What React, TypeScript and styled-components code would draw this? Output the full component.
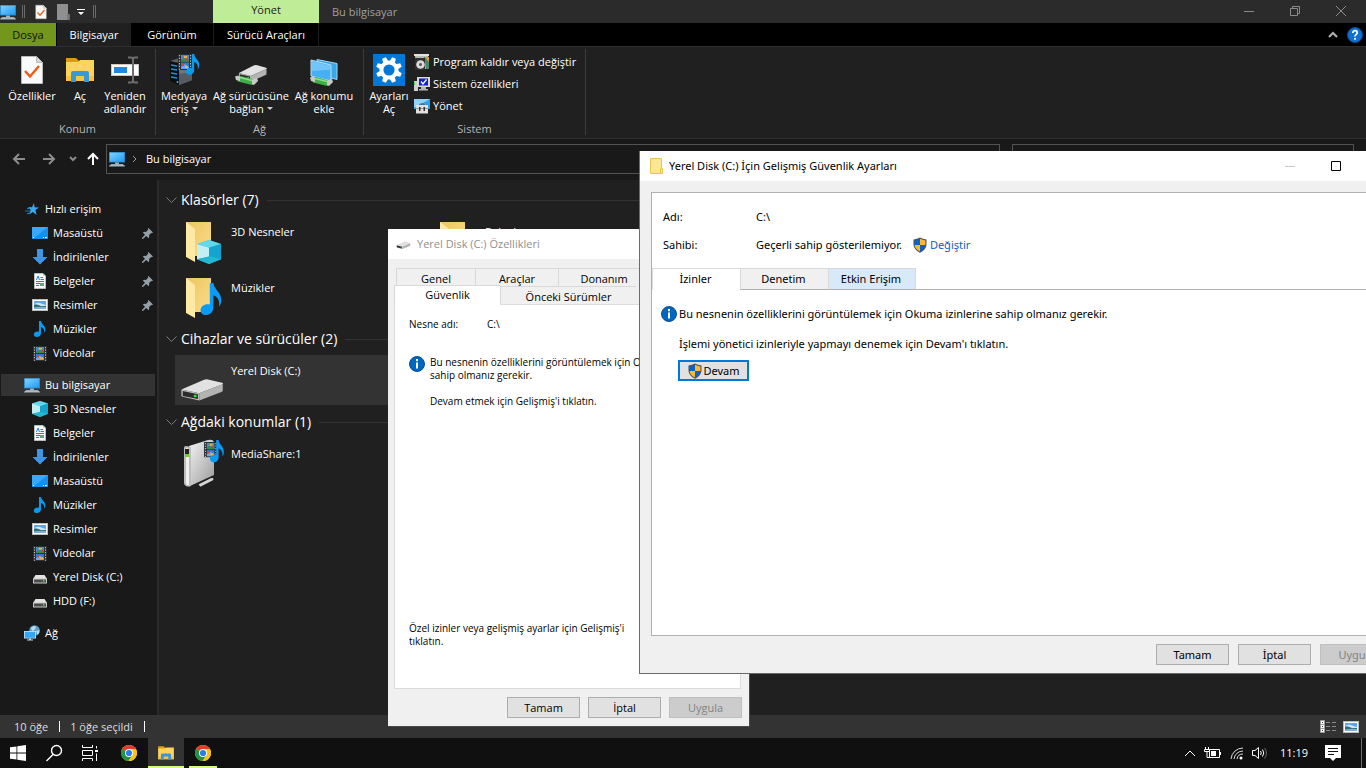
import React from 'react';
import styled, { createGlobalStyle, css } from 'styled-components';

const Global = createGlobalStyle`
  *, *::before, *::after { box-sizing: border-box; }
  html, body { margin: 0; background: #101010; }
  body { font: 11px/16px "Open Sans", "Noto Sans", sans-serif; color: #fff; }
  button { font: inherit; color: inherit; background: none; border: 0; padding: 0; margin: 0; }
  ul { list-style: none; margin: 0; padding: 0; }
  h1, h2, p, dl, dd, dt { margin: 0; font: inherit; }
  svg { display: block; flex: none; }
`;

/* ---------- icons ---------- */

type IconProps = { size?: number };

const PcIcon = ({ size = 16 }: IconProps) => (
  <svg width={size} height={size} viewBox="0 0 16 16">
    <defs>
      <linearGradient id="pcScreen" x1="0" y1="0" x2="1" y2="1">
        <stop offset="0" stopColor="#7fd3ff" />
        <stop offset="1" stopColor="#1e9bf5" />
      </linearGradient>
    </defs>
    <rect x="0" y="1" width="16" height="10.5" fill="#2d7fb8" />
    <rect x="0.8" y="1.7" width="14.4" height="9" fill="url(#pcScreen)" />
    <rect x="6" y="11.5" width="4" height="1.5" fill="#9fb4c2" />
    <path d="M2 13.2h12l2 2H0z" fill="#c3d5e0" />
    <path d="M0 14.6h16v.8H0z" fill="#7e98a8" />
  </svg>
);

const CheckDoc = ({ size = 16 }: IconProps) => (
  <svg width={size} height={size} viewBox="0 0 32 32">
    <path d="M5.500 2.500h15l6 6v21h-21z" fill="#fafafa" stroke="#b9b9b9" strokeWidth="1" />
    <path d="M20.500 2.500v6h6z" fill="#d8d8d8" stroke="#b9b9b9" />
    <path d="M9 17l5 5.500L23 12" fill="none" stroke="#f05a14" strokeWidth="2.400" />
  </svg>
);

const GreyFolder = () => (
  <svg width="16" height="16" viewBox="0 0 16 16">
    <path d="M2 0h11v10h1.500v6H2z" fill="#8f8f8f" />
    <path d="M12 10h2.500v6H12z" fill="#777" />
  </svg>
);

const YellowFolder = () => (
  <svg width="16" height="16" viewBox="0 0 16 16">
    <path d="M2.500.5h11v10h1v5h-12z" fill="#ffe596" stroke="#e8c552" />
    <path d="M12.500 15.500v-5" stroke="#e8c552" />
  </svg>
);

const ExplorerFolder = ({ size = 32 }: IconProps) => (
  <svg width={size} height={size} viewBox="0 0 32 32">
    <path d="M2 4h10l3 3v4H2z" fill="#e09c08" />
    <path d="M2 8h12l2-2h14v21H2z" fill="#ffd45e" />
    <path d="M2 22h28v5H2z" fill="#fbc33c" />
    <path d="M7 28V19q0-2 2-2h14q2 0 2 2v9h-5v-6h-8v6z" fill="#3c96dc" />
  </svg>
);

const RenameIcon = () => (
  <svg width="32" height="32" viewBox="0 0 32 32">
    <rect x="2.500" y="10.500" width="27" height="11" fill="#fff" stroke="#c8c8c8" />
    <rect x="5" y="13" width="13" height="6" fill="#1e88e5" />
    <path d="M19 3.500h3q2 0 2 2v21q0 2-2 2h-3M29 3.500h-3q-2 0-2 2v21q0 2 2 2h3" fill="none" stroke="#6e6e6e" strokeWidth="2" />
    <path d="M24 5v22" stroke="#6e6e6e" strokeWidth="2" />
  </svg>
);

const FilmShape = () => (
  <>
    <rect x="0" y="0" width="14" height="16" fill="#2c2c2c" />
    <path d="M1.500 1v15M12.500 1v15" stroke="#b8b8b8" strokeWidth="1.200" strokeDasharray="1.300 1.400" />
    <rect x="3" y="1" width="8" height="6.500" fill="#4c86d8" />
    <path d="M3 6l3-2 3 2 2-1v2.500H3z" fill="#3b8a4a" />
    <rect x="6" y="2" width="3" height="2" fill="#e8b23c" />
    <rect x="8" y="4" width="2" height="2" fill="#cf3b3b" />
    <rect x="3" y="8.500" width="8" height="6.500" fill="#3a74d0" />
    <path d="M3 13l4-3 4 3v2H3z" fill="#67a8f0" />
    <rect x="4" y="10" width="2" height="2" fill="#d8453b" />
    <rect x="7" y="12" width="3" height="2" fill="#e6b94a" />
  </>
);

const NoteShape = () => (
  <path d="M6 0h2c.3 3.500 5 4.500 4.300 9.500-.1.900-.6 1.700-1.200 2.300.6-3-.8-5-3.100-5.700v6.200C8 14.600 6 16 4 16s-3.400-1.200-3.100-2.800C1.200 11.400 3.700 10 6 10.800z" fill="#0a9bf5" />
);

const MediaIcon = () => (
  <svg width="32" height="32" viewBox="0 0 32 32">
    <path d="M2 7l9-3v27l-9-4z" fill="#0c0e10" />
    <path d="M2 7l9-3 13 2v2l-13 1z" fill="#5b6168" />
    <path d="M11 9l13-1v18l-13 5z" fill="#6f757c" />
    <path d="M11 20l13-2v8l-13 5z" fill="#565c63" />
    <path d="M3 11l6 1M3 15l6 1M3 19l6 1M3 23l6 1" stroke="#1e90ff" strokeWidth="1.400" />
    <circle cx="9.500" cy="28" r="1" fill="#39b9ff" />
    <g transform="translate(10 0)"><FilmShape /></g>
    <g transform="translate(17 0) scale(1.150 1.300)"><NoteShape /></g>
  </svg>
);

const DriveShape = () => (
  <>
    <path d="M1 12L17 2q2-1 4-.3L30.500 5q1 .5.500 1.500L14 16z" fill="#e2e2e2" />
    <path d="M1 12l13 4v7.500L2 19.500q-1-.4-1-1.500z" fill="#bdbdbd" />
    <path d="M14 16L31 6.500V13q0 1-1 1.600L14 23.500z" fill="#b3b3b3" />
    <path d="M2 13.500l11 3.300v5.200L2 18.700z" fill="#2b2b2b" />
    <rect x="10" y="17.500" width="2" height="2.500" fill="#3ee03e" />
  </>
);

const NetCable = () => (
  <>
    <path d="M1 21l5-1 14 4v3.500l-3 1.500L3 25.500z" fill="#3fae46" />
    <path d="M3 21l14 3.500" stroke="#8be08e" strokeWidth="1.500" />
    <path d="M0 20.500l3-1 2 1.500v4l-4-1zM17 23.500l5-1.500 1 3-4 4-2-1z" fill="#c9c9c9" />
  </>
);

const NetDriveIcon = () => (
  <svg width="32" height="32" viewBox="0 0 32 32">
    <g transform="translate(3 10) scale(.92 .75)"><DriveShape /></g>
    <g transform="translate(0 2)"><NetCable /></g>
  </svg>
);

const NetPlaceIcon = () => (
  <svg width="32" height="32" viewBox="0 0 32 32">
    <path d="M9 5.500l20 4v16l-20-5z" fill="#3aa6ec" stroke="#9ed6f7" />
    <path d="M3 6l20 5v16L3 22z" fill="#46b0f4" stroke="#b9e2fa" />
    <path d="M4 7l18 4.700v4L4 17z" fill="#84cefa" opacity=".7" />
    <g transform="translate(2 3)"><NetCable /></g>
  </svg>
);

const SettingsIcon = () => (
  <svg width="32" height="32" viewBox="0 0 32 32">
    <rect width="32" height="32" fill="#0078d7" />
    <g fill="#fff">
      {[0, 45, 90, 135, 180, 225, 270, 315].map((a) => (
        <path key={a} transform={`rotate(${a + 22.5} 16 16)`} d="M13.200 8l.8-5h4l.8 5z" />
      ))}
    </g>
    <circle cx="16" cy="16" r="7.600" fill="none" stroke="#fff" strokeWidth="4" />
  </svg>
);

const UninstallIcon = () => (
  <svg width="16" height="16" viewBox="0 0 16 16">
    <path d="M1 1h13v14H2z" fill="#b9bdb8" />
    <path d="M0 0h15v2H0z" fill="#e2e2e2" />
    <path d="M10 3h5v12h-3z" fill="#4a8a66" />
    <path d="M11 3l4 0v5z" fill="#e59a45" />
    <rect x="1" y="4" width="10" height="12" fill="#303030" />
    <circle cx="6.500" cy="10.500" r="4.300" fill="#d9d9d9" />
    <circle cx="6.500" cy="10.500" r="1.500" fill="#555" />
  </svg>
);

const SystemIcon = () => (
  <svg width="16" height="16" viewBox="0 0 16 16">
    <rect x="0" y="5" width="4" height="10" fill="#cfcfcf" />
    <rect x="0" y="6" width="1" height="3" fill="#58d058" />
    <rect x="3" y="1" width="13" height="10" fill="#d8d8d8" />
    <rect x="5" y="2.500" width="9" height="7" fill="#1420c8" />
    <path d="M7 5.500l2 2.500 3.500-4.500" fill="none" stroke="#fff" strokeWidth="1.300" />
    <path d="M7 11h5v2h2v1.500H5V13h2z" fill="#b4b4b4" />
  </svg>
);

const ManageIcon = () => (
  <svg width="16" height="16" viewBox="0 0 16 16">
    <rect x="0" y="1" width="16" height="10" fill="#2f9fe8" />
    <path d="M0 1h16L0 10z" fill="#8ed3fa" />
    <path d="M6 7.500V6h4v1.500" fill="none" stroke="#555" />
    <rect x="2" y="7" width="12" height="8.500" fill="#e0e0e0" />
    <rect x="2" y="10" width="12" height="1" fill="#999" />
    <path d="M5 9h1.500v4H5zM9.500 9H11v4H9.500z" fill="#333" />
  </svg>
);

const StarIcon = () => (
  <svg width="16" height="16" viewBox="0 0 16 16">
    <path d="M10 2l.6 4.300 4.400.2-3.600 2.600 1.200 4.900-3.700-3-4.300 2.800L6.800 9 4 6l4 .2z" fill="#35a9f2" />
    <path d="M3 7.500h3M1 10h5M3 12.500h3" stroke="#2279b5" />
  </svg>
);

const DesktopIcon = () => (
  <svg width="16" height="16" viewBox="0 0 16 16">
    <rect y="2" width="16" height="12" fill="#1490ee" />
    <path d="M0 2h16L2 13H0z" fill="#37a8fb" />
    <path d="M1 12.500h1M11 12.500h1M13 12.500h2" stroke="#fff" />
  </svg>
);

const DownloadIcon = () => (
  <svg width="16" height="16" viewBox="0 0 16 16">
    <path d="M5 0h6v8h4.500L8 15.500.5 8H5z" fill="#3d97e6" />
  </svg>
);

const DocsIcon = () => (
  <svg width="16" height="16" viewBox="0 0 16 16">
    <path d="M2.500.5H11L13.500 3v12.500h-11z" fill="#fdfdfd" stroke="#bdbdbd" />
    <path d="M11 .5V3h2.500z" fill="#c9c9c9" />
    <path d="M4.500 7L6 3l1.500 4M8.500 4.500H11M8.500 6.500H12M4 8.500h8" fill="none" stroke="#1e88d8" />
    <path d="M4 10.500h4M4 12.500h3" stroke="#1e88d8" />
    <rect x="8" y="10" width="4" height="3" fill="#58b060" />
  </svg>
);

const PicturesIcon = () => (
  <svg width="16" height="16" viewBox="0 0 16 16">
    <rect x=".5" y="2.500" width="15" height="11" fill="#fff" stroke="#bdbdbd" />
    <rect x="2" y="4" width="12" height="8" fill="#5fa4e6" />
    <path d="M2 7q4-2 6-1t6 2v1H2z" fill="#cfe6f5" />
    <path d="M2 7.500l3 0 4 1.500 5 0v1.500H2z" fill="#2f6d72" />
    <path d="M2 10.500q5-1 12-.5V12H2z" fill="#7fb0dc" />
  </svg>
);

const MusicIcon = () => (
  <svg width="16" height="16" viewBox="0 0 16 16">
    <g transform="translate(1 0)"><NoteShape /></g>
  </svg>
);

const VideoIcon = () => (
  <svg width="16" height="16" viewBox="0 0 16 16">
    <g transform="translate(1 1) scale(1 .94)"><FilmShape /></g>
  </svg>
);

const CubeIcon = ({ size = 16 }: IconProps) => (
  <svg width={size} height={size} viewBox="0 0 16 16">
    <path d="M8 0l8 2.600v10.200L8 16l-8-3.200V2.600z" fill="#22bcd6" />
    <path d="M8 0l8 2.600L8 5.200 0 2.600z" fill="#62d8e8" />
    <path d="M0 2.600l8 2.600V11l-8 1.800z" fill="#c3eff4" />
    <path d="M8 5.200l8-2.600v10.200L8 11z" fill="#11a5cf" />
    <path d="M8 11l8 1.800L8 16l-8-3.200z" fill="#24b7d4" />
  </svg>
);

const SmallDrive = () => (
  <svg width="16" height="16" viewBox="0 0 16 16">
    <path d="M3.500 6h9l2.500 4H1z" fill="#e3e3e3" />
    <rect x="1" y="9.500" width="14" height="5" fill="#c9c9c9" />
    <rect x="2" y="10.500" width="12" height="3" fill="#4b4b4b" />
    <rect x="11" y="11" width="1.500" height="1.500" fill="#4be04b" />
  </svg>
);

const TitleDrive = () => (
  <svg width="16" height="16" viewBox="0 0 16 16">
    <g transform="translate(0 5) scale(.46 .34)"><DriveShape /></g>
  </svg>
);

const NetworkIcon = () => (
  <svg width="16" height="16" viewBox="0 0 16 16">
    <circle cx="10.500" cy="5.500" r="5.300" fill="#5c9fc4" />
    <path d="M7 2.500q3-2.500 5-1l-1 3-3 2zM12 6l3.500-1q.3 3-2 5z" fill="#b7dbea" />
    <rect x="0" y="6" width="12" height="7.500" fill="#c6e3f5" />
    <rect x=".8" y="6.800" width="10.400" height="6" fill="#34a6f4" />
    <path d="M5 13.500h2v1h2v1H3v-1h2z" fill="#c6d4dc" />
  </svg>
);

const PinIcon = () => (
  <svg width="11" height="11" viewBox="0 0 12 12">
    <path d="M7 0l5 5-1.200.6-.8-.2-2.300 2.300.2 2.300-1 1L4.600 8.700 1 12H0v-1l3.300-3.600L1 5.100l1-1 2.300.2L6.600 2l-.2-.8z" fill="#93a0a8" />
  </svg>
);

const BigFolder = ({ badge }: { badge?: 'cube' | 'note' }) => (
  <svg width="48" height="48" viewBox="0 0 48 48">
    <defs>
      <linearGradient id="folderBack" x1="0" y1="0" x2="1" y2="1">
        <stop offset="0" stopColor="#efc65e" />
        <stop offset="1" stopColor="#f8dc8c" />
      </linearGradient>
    </defs>
    <path d="M6 5h25v34H6z" fill="url(#folderBack)" />
    <path d="M6 5l9 7v33l-9-5z" fill="#ffe9a6" />
    {badge === 'cube' && <g transform="translate(17 23)"><CubeIcon size={24} /></g>}
    {badge === 'note' && <g transform="translate(19 10) scale(1.800 2)"><NoteShape /></g>}
  </svg>
);

const BigDrive = () => (
  <svg width="48" height="48" viewBox="0 0 48 48">
    <g transform="translate(0 22) scale(1.380 .96)"><DriveShape /></g>
  </svg>
);

const MediaServer = () => (
  <svg width="48" height="48" viewBox="0 0 48 48">
    <defs>
      <linearGradient id="serverSide" x1="0" y1="0" x2="1" y2="1">
        <stop offset="0" stopColor="#f4f4f4" />
        <stop offset="1" stopColor="#9b9b9b" />
      </linearGradient>
    </defs>
    <path d="M19 46l12-6q3-1 1 1l-12 6" fill="none" stroke="#d5d5d5" strokeWidth="1.500" />
    <path d="M9 7L28 1q5-1 6 2v33L10 47z" fill="url(#serverSide)" />
    <path d="M4 9q0-2 2-2l5 1v39q-3 1-5 0-2-1-2-3z" fill="#bdbdbd" />
    <path d="M6 9l3 1v36H7q-1-1-1-2z" fill="#efefef" />
    <rect x="5" y="10" width="4" height="5" fill="#222" />
    <rect x="5" y="15" width="4" height="3" fill="#67d317" />
    <g transform="translate(24 3) scale(.95)"><FilmShape /></g>
    <g transform="translate(29 1) scale(1.200 1.400)"><NoteShape /></g>
  </svg>
);

const ShieldIcon = () => (
  <svg width="16" height="16" viewBox="0 0 16 16">
    <path d="M8 .5q3 1.700 6.500 2V8q-.5 5-6.500 7.700Q2 13 1.500 8V2.500Q5 2.200 8 .5z" fill="#4a5560" />
    <path d="M8 1.700V8H2.600V3.400Q5.500 3.100 8 1.700z" fill="#0a63c9" />
    <path d="M8 1.700V8h5.400V3.400Q10.500 3.100 8 1.700z" fill="#fdb92e" />
    <path d="M8 14.500V8H2.600q.4 4.300 5.400 6.500z" fill="#fdb92e" />
    <path d="M8 14.500V8h5.400q-.4 4.300-5.400 6.500z" fill="#0a63c9" />
  </svg>
);

const InfoIcon = () => (
  <svg width="16" height="16" viewBox="0 0 16 16">
    <circle cx="8" cy="8" r="7.500" fill="#0067c0" stroke="#0b4f93" />
    <rect x="7" y="6.500" width="2" height="6" fill="#fff" />
    <rect x="7" y="3" width="2" height="2.200" fill="#fff" />
  </svg>
);

const HelpIcon = () => (
  <svg width="16" height="16" viewBox="0 0 16 16">
    <circle cx="8" cy="8" r="7.500" fill="#1070d4" stroke="#0a4d9a" />
    <path d="M5.800 6q0-2.300 2.200-2.300T10.200 6c0 1.400-2.200 1.500-2.200 3.600" fill="none" stroke="#fff" strokeWidth="1.700" />
    <rect x="7.100" y="10.900" width="1.800" height="1.800" fill="#fff" />
  </svg>
);

const ChromeIcon = () => (
  <svg width="16" height="16" viewBox="0 0 16 16">
    <circle cx="8" cy="8" r="8" fill="#fbc116" />
    <path d="M8 8L1.100 4A8 8 0 0 1 14.900 4z" fill="#e33b2e" />
    <path d="M1.100 4A8 8 0 0 0 7.500 16l4-6L8 8z" fill="#229342" />
    <path d="M8 4h6.900A8 8 0 0 1 7.500 16l4-6z" fill="#fbc116" />
    <circle cx="8" cy="8" r="4" fill="#fff" />
    <circle cx="8" cy="8" r="3.100" fill="#2b7de9" />
  </svg>
);

type StrokeProps = { d: string; w?: number; h?: number; color?: string; weight?: number };
const Stroke = ({ d, w = 16, h = 16, color = 'currentColor', weight = 1 }: StrokeProps) => (
  <svg width={w} height={h} viewBox={`0 0 ${w} ${h}`} fill="none" stroke={color} strokeWidth={weight}>
    <path d={d} />
  </svg>
);

/* ---------- explorer shell ---------- */

const Screen = styled.div`
  position: relative;
  display: flex;
  flex-direction: column;
  min-height: 100vh;
  overflow: hidden;
  background: #202020;
`;

const TitleBar = styled.header`
  display: flex;
  height: 23px;
  background: #2b2b2b;
`;

const QuickAccess = styled.div`
  display: flex;
  align-items: center;
  flex: none;
  width: 213px;
`;

const QuickButton = styled.button<{ $wide?: number }>`
  display: flex;
  justify-content: center;
  width: ${(p) => p.$wide ?? 22}px;
`;

const QuickMark = styled.span`
  width: 3px;
  height: 13px;
  margin: 0 6px;
  border: solid #6a6a6a;
  border-width: 0 1px;
`;

const ContextLabel = styled.div`
  width: 106px;
  padding-top: 2px;
  background: #bfec97;
  color: #1c1c1c;
  text-align: center;
`;

const WindowTitle = styled.h1`
  flex: 1;
  padding: 4px 0 0 13px;
  color: #a0a0a0;
`;

const Caption = styled.div`
  display: flex;
  padding-right: 2px;
  color: #8a8a8a;
`;

const CaptionButton = styled.button`
  display: flex;
  align-items: center;
  justify-content: center;
  width: 46px;
  height: 21px;
`;

const RibbonTabs = styled.nav`
  display: flex;
  height: 23px;
  background: #000;
`;

const RibbonTab = styled.button<{ $w: number; $kind?: 'file' | 'active' | 'context' }>`
  width: ${(p) => p.$w}px;
  height: 23px;
  ${(p) => p.$kind === 'file' && css`background: #73961c; color: #101010; margin-right: 1px;`}
  ${(p) => p.$kind === 'active' && css`background: #202020;`}
  ${(p) => p.$kind === 'context' && css`border: solid #1c1c1c; border-width: 0 1px;`}
`;

const RibbonTools = styled.div`
  display: flex;
  align-items: center;
  gap: 8px;
  margin-left: auto;
  padding-right: 3px;
`;

const Ribbon = styled.div`
  display: flex;
  height: 93px;
  padding-top: 2px;
  border: solid #2e2e2e;
  border-width: 1px 0;
  background: #202020;
`;

const RibbonGroup = styled.section<{ $w: number }>`
  display: flex;
  flex-direction: column;
  width: ${(p) => p.$w}px;
  border-right: 1px solid #3c3c3c;
  height: 86px;
`;

const GroupTools = styled.div`
  display: flex;
  flex: 1;
  padding-left: 4px;
`;

const GroupLabel = styled.div`
  color: #b4b4b4;
  text-align: center;
  line-height: 12px;
`;

const BigTool = styled.button<{ $w: number }>`
  display: flex;
  flex-direction: column;
  align-items: center;
  gap: 3px;
  width: ${(p) => p.$w}px;
  padding-top: 5px;
  line-height: 13px;
  white-space: nowrap;
`;

const ToolText = styled.span`
  display: block;
`;

const MenuArrow = styled.span`
  display: inline-block;
  margin-left: 3px;
  border: 3px solid transparent;
  border-top-color: #d0d0d0;
  border-bottom: 0;
  vertical-align: 3px;
`;

const SmallTools = styled.div`
  display: flex;
  flex-direction: column;
  gap: 6px;
  padding: 5px 0 0 4px;
`;

const SmallTool = styled.button`
  display: flex;
  align-items: center;
  gap: 3px;
  white-space: nowrap;
`;

const NavBar = styled.div`
  display: flex;
  align-items: center;
  height: 41px;
  padding: 0 12px 1px 4px;
  background: #191919;
`;

const NavButton = styled.button<{ $w: number; $dim?: boolean }>`
  display: flex;
  justify-content: center;
  width: ${(p) => p.$w}px;
  color: ${(p) => (p.$dim ? '#8c8c8c' : '#fff')};
`;

const Address = styled.div`
  display: flex;
  align-items: center;
  flex: 1;
  gap: 5px;
  height: 30px;
  margin-left: 1px;
  padding-left: 2px;
  border: 1px solid #535353;
`;

const Crumb = styled.a`
  padding-left: 1px;
  color: #fff;
  text-decoration: none;
`;

const SearchBox = styled.input`
  width: 342px;
  height: 30px;
  margin-left: 12px;
  border: 1px solid #535353;
  background: #191919;
  color: #fff;
`;

const Body = styled.div`
  display: flex;
  flex: 1;
`;

const Sidebar = styled.nav`
  display: flex;
  flex-direction: column;
  flex: none;
  gap: 8px;
  width: 159px;
  padding: 17px 2px 0 1px;
  border-right: 2px solid #2b2b2b;
  background: #191919;
`;

const TreeRow = styled.li<{ $depth: number; $selected?: boolean }>`
  display: flex;
  align-items: center;
  gap: 5px;
  height: 24px;
  padding: 0 2px 0 ${(p) => (p.$depth ? 31 : 23)}px;
  border: solid transparent;
  border-width: 1px 0;
  background: ${(p) => (p.$selected ? '#333' : 'transparent')};
  background-clip: padding-box;
`;

const TreeLabel = styled.span`
  flex: 1;
  white-space: nowrap;
`;

const Content = styled.main`
  flex: 1;
  padding: 4px 12px 0 7px;
  background: #202020;
`;

const Section = styled.section`
  margin-bottom: 1px;
`;

const SectionHead = styled.h2`
  display: flex;
  align-items: center;
  height: 32px;
  font-size: 14px;
  line-height: 20px;
  &::after {
    content: '';
    flex: 1;
    height: 1px;
    margin-left: 8px;
    background: #333;
  }
`;

const HeadArrow = styled.span`
  width: 15px;
  color: #7c7c7c;
`;

const Tiles = styled.ul<{ $rows?: number }>`
  display: grid;
  grid-template-rows: repeat(${(p) => p.$rows ?? 1}, 50px);
  grid-auto-flow: column;
  grid-auto-columns: 248px;
  gap: 6px;
  padding-left: 9px;
`;

const Tile = styled.li<{ $selected?: boolean }>`
  display: flex;
  gap: 3px;
  padding: 1px 0 0 5px;
  background: ${(p) => (p.$selected ? '#333' : 'transparent')};
`;

const TileName = styled.span`
  padding-top: 7px;
`;

const StatusBar = styled.footer`
  display: flex;
  align-items: center;
  height: 23px;
  padding: 0 7px 0 14px;
  background: #333;
  color: #dedede;
`;

const StatusItem = styled.span`
  padding-right: 11px;
  margin-right: 10px;
  border-right: 1px solid #fff;
  line-height: 11px;
`;

const ViewButtons = styled.div`
  display: flex;
  gap: 7px;
  margin-left: auto;
`;

/* ---------- taskbar ---------- */

const Taskbar = styled.nav`
  display: flex;
  height: 30px;
  background: #101010;
`;

const TaskButton = styled.button<{ $w?: number; $open?: boolean; $active?: boolean; $inset?: number }>`
  display: flex;
  align-items: center;
  justify-content: center;
  width: ${(p) => p.$w ?? 36}px;
  height: 30px;
  margin-left: ${(p) => p.$inset ?? 0}px;
  border: solid transparent;
  border-width: 2px 0;
  background: ${(p) => (p.$active ? '#333' : 'transparent')};
  border-bottom-color: ${(p) => (p.$open ? '#d3fb7c' : 'transparent')};
`;

const Tray = styled.div`
  display: flex;
  align-items: center;
  gap: 8px;
  margin-left: auto;
`;

const Clock = styled.time`
  margin: 0 9px 0 3px;
`;

const ShowDesktop = styled.button`
  width: 5px;
  height: 30px;
  margin-left: 12px;
  border-left: 1px solid #6a6a6a;
`;

/* ---------- dialogs ---------- */

const PropsWindow = styled.section`
  position: absolute;
  left: 388px;
  top: 229px;
  display: flex;
  flex-direction: column;
  width: 362px;
  height: 498px;
  border: solid #484848;
  border-width: 0 1px 1px 0;
  background: #f0f0f0;
  color: #000;
  font-size: 10px;
  line-height: 13px;
`;

const SecurityWindow = styled.section`
  position: absolute;
  left: 639px;
  top: 151px;
  display: flex;
  flex-direction: column;
  width: 767px;
  height: 523px;
  border: 1px solid #6b6b6b;
  border-top: 0;
  background: #f0f0f0;
  color: #000;
  font-family: "Noto Sans", "Open Sans", sans-serif;
`;

const DialogTitle = styled.header<{ $dim?: boolean }>`
  display: flex;
  align-items: center;
  gap: 5px;
  height: 30px;
  padding-left: 8px;
  background: #fff;
  color: ${(p) => (p.$dim ? '#8f8f8f' : '#000')};
  font-size: 11px;
  line-height: 16px;
`;

const DialogCaption = styled.div`
  display: flex;
  align-items: center;
  margin-left: auto;
  padding-right: 46px;
`;

const TabRow = styled.div`
  display: flex;
  padding-left: 8px;
`;

const TabStack = styled.div`
  padding-top: 9px;
`;

const PropTab = styled.button<{ $w: number }>`
  width: ${(p) => p.$w}px;
  height: 18px;
  padding-top: 1px;
  border: solid #d9d9d9;
  border-width: 1px 0 0 1px;
  background: #f0f0f0;
  font-size: 11px;
`;

const PropTabActive = styled.button`
  position: relative;
  width: 106px;
  height: 20px;
  margin: -1px 0 -1px -2px;
  padding-bottom: 3px;
  border: solid #d9d9d9;
  border-width: 1px 0 0 1px;
  background: #fff;
  font-size: 11px;
`;

const PropPage = styled.div`
  display: flex;
  flex-direction: column;
  flex: 1;
  margin: 0 8px 0 6px;
  padding: 13px 14px 40px;
  border: 1px solid #dcdcdc;
  background: #fff;
`;

const FieldRow = styled.dl<{ $label: number }>`
  display: grid;
  grid-template-columns: ${(p) => p.$label}px 1fr;
`;

const Notice = styled.div<{ $gap: number; $top: number }>`
  display: flex;
  gap: ${(p) => p.$gap}px;
  margin-top: ${(p) => p.$top}px;
`;

const NoticeText = styled.div`
  display: flex;
  flex-direction: column;
  gap: 13px;
`;

const PageNote = styled.p`
  width: 230px;
  margin-top: auto;
`;

const DialogButtons = styled.div<{ $gap: number; $right: number }>`
  display: flex;
  justify-content: flex-end;
  gap: ${(p) => p.$gap}px;
  padding: 8px ${(p) => p.$right}px 8px 0;
  font-size: 11px;
`;

const PushButton = styled.button`
  width: 73px;
  height: 21px;
  border: 1px solid #adadad;
  background: #e1e1e1;
  &:disabled {
    border-color: #bfbfbf;
    background: #ccc;
    color: #838383;
  }
`;

const SecurityPage = styled.div`
  display: flex;
  flex-direction: column;
  flex: 1;
  margin: 11px 11px 0;
  border: 1px solid #b0b0b0;
  background: #fff;
`;

const OwnerFields = styled.div`
  display: flex;
  flex-direction: column;
  gap: 12px;
  padding: 16px 11px 15px;
`;

const OwnerValue = styled.dd`
  display: flex;
  gap: 10px;
`;

const ChangeLink = styled.a`
  display: flex;
  gap: 2px;
  color: #0a62cc;
  text-decoration: none;
`;

const SecurityTabs = styled.div`
  display: flex;
  &::after {
    content: '';
    flex: 1;
    border-bottom: 1px solid #b0b0b0;
  }
`;

const SecurityTab = styled.button<{ $look?: 'active' | 'hover' }>`
  width: 88px;
  height: 22px;
  padding-right: 2px;
  border: 1px solid #d9d9d9;
  border-bottom-color: #b0b0b0;
  border-right-width: ${(p) => (p.$look === 'hover' ? 1 : 0)}px;
  background: ${(p) => (p.$look === 'hover' ? '#d8e9f9' : '#f0f0f0')};
  ${(p) => p.$look === 'active' && css`background: #fff; border-bottom-color: #fff;`}
`;

const SecurityBody = styled.div`
  padding: 0 9px;
`;

const SecurityText = styled(NoticeText)`
  gap: 14px;
`;

const ContinueButton = styled.button`
  display: flex;
  align-items: center;
  justify-content: center;
  width: 71px;
  height: 21px;
  margin: 8px 0 0 17px;
  border: 2px solid #0078d7;
  background: #e1e1e1;
`;

/* ---------- data ---------- */

type TreeItem = { name: string; icon: React.ReactNode; depth?: number; pinned?: boolean; selected?: boolean };

const tree: TreeItem[][] = [
  [
    { name: 'Hızlı erişim', icon: <StarIcon /> },
    { name: 'Masaüstü', icon: <DesktopIcon />, depth: 1, pinned: true },
    { name: 'İndirilenler', icon: <DownloadIcon />, depth: 1, pinned: true },
    { name: 'Belgeler', icon: <DocsIcon />, depth: 1, pinned: true },
    { name: 'Resimler', icon: <PicturesIcon />, depth: 1, pinned: true },
    { name: 'Müzikler', icon: <MusicIcon />, depth: 1 },
    { name: 'Videolar', icon: <VideoIcon />, depth: 1 },
  ],
  [
    { name: 'Bu bilgisayar', icon: <PcIcon />, selected: true },
    { name: '3D Nesneler', icon: <CubeIcon />, depth: 1 },
    { name: 'Belgeler', icon: <DocsIcon />, depth: 1 },
    { name: 'İndirilenler', icon: <DownloadIcon />, depth: 1 },
    { name: 'Masaüstü', icon: <DesktopIcon />, depth: 1 },
    { name: 'Müzikler', icon: <MusicIcon />, depth: 1 },
    { name: 'Resimler', icon: <PicturesIcon />, depth: 1 },
    { name: 'Videolar', icon: <VideoIcon />, depth: 1 },
    { name: 'Yerel Disk (C:)', icon: <SmallDrive />, depth: 1 },
    { name: 'HDD (F:)', icon: <SmallDrive />, depth: 1 },
  ],
  [{ name: 'Ağ', icon: <NetworkIcon /> }],
];

const Head = ({ children }: { children: React.ReactNode }) => (
  <SectionHead>
    <HeadArrow><Stroke w={11} h={8} d="M.5 1.500l5 5 5-5" /></HeadArrow>
    {children}
  </SectionHead>
);

const ExplorerWindow = () => (
  <>
    <TitleBar>
      <QuickAccess>
        <PcIcon />
        <QuickMark />
        <QuickButton $wide={20} aria-label="Özellikler"><CheckDoc /></QuickButton>
        <QuickButton $wide={24} aria-label="Yeni klasör"><GreyFolder /></QuickButton>
        <QuickButton $wide={12} aria-label="Özelleştir">
          <svg width="8" height="8" viewBox="0 0 8 8"><path d="M0 1h8v1H0zM1 4h6L4 7z" fill="#fff" /></svg>
        </QuickButton>
        <QuickMark />
      </QuickAccess>
      <ContextLabel>Yönet</ContextLabel>
      <WindowTitle>Bu bilgisayar</WindowTitle>
      <Caption>
        <CaptionButton aria-label="Simge durumuna küçült"><Stroke w={10} h={10} d="M0 5.500h10" /></CaptionButton>
        <CaptionButton aria-label="Geri yükle"><Stroke w={10} h={10} d="M.5 2.500h7v7h-7zM2.500 2.500v-2h7v7h-2" /></CaptionButton>
        <CaptionButton aria-label="Kapat"><Stroke w={10} h={10} d="M0 0l10 10M10 0L0 10" /></CaptionButton>
      </Caption>
    </TitleBar>

    <RibbonTabs>
      <RibbonTab $w={56} $kind="file">Dosya</RibbonTab>
      <RibbonTab $w={74} $kind="active">Bilgisayar</RibbonTab>
      <RibbonTab $w={82}>Görünüm</RibbonTab>
      <RibbonTab $w={106} $kind="context">Sürücü Araçları</RibbonTab>
      <RibbonTools>
        <button aria-label="Şeridi küçült"><Stroke w={12} h={8} color="#b4b4b4" weight={2} d="M2 6l4-4 4 4" /></button>
        <button aria-label="Yardım"><HelpIcon /></button>
      </RibbonTools>
    </RibbonTabs>

    <Ribbon>
      <RibbonGroup $w={156}>
        <GroupTools>
          <BigTool $w={56}><CheckDoc size={32} /><ToolText>Özellikler</ToolText></BigTool>
          <BigTool $w={40}><ExplorerFolder /><ToolText>Aç</ToolText></BigTool>
          <BigTool $w={50}><RenameIcon /><ToolText>Yeniden<br />adlandır</ToolText></BigTool>
        </GroupTools>
        <GroupLabel>Konum</GroupLabel>
      </RibbonGroup>
      <RibbonGroup $w={208}>
        <GroupTools>
          <BigTool $w={48}><MediaIcon /><ToolText>Medyaya<br />eriş<MenuArrow /></ToolText></BigTool>
          <BigTool $w={86}><NetDriveIcon /><ToolText>Ağ sürücüsüne<br />bağlan<MenuArrow /></ToolText></BigTool>
          <BigTool $w={60}><NetPlaceIcon /><ToolText>Ağ konumu<br />ekle</ToolText></BigTool>
        </GroupTools>
        <GroupLabel>Ağ</GroupLabel>
      </RibbonGroup>
      <RibbonGroup $w={222}>
        <GroupTools>
          <BigTool $w={42}><SettingsIcon /><ToolText>Ayarları<br />Aç</ToolText></BigTool>
          <SmallTools>
            <SmallTool><UninstallIcon />Program kaldır veya değiştir</SmallTool>
            <SmallTool><SystemIcon />Sistem özellikleri</SmallTool>
            <SmallTool><ManageIcon />Yönet</SmallTool>
          </SmallTools>
        </GroupTools>
        <GroupLabel>Sistem</GroupLabel>
      </RibbonGroup>
    </Ribbon>

    <NavBar>
      <NavButton $w={30} $dim aria-label="Geri"><Stroke w={14} h={12} weight={2} d="M13 6H2M7 1L2 6l5 5" /></NavButton>
      <NavButton $w={30} $dim aria-label="İleri"><Stroke w={14} h={12} weight={2} d="M1 6h11M7 1l5 5-5 5" /></NavButton>
      <NavButton $w={17} $dim aria-label="Son konumlar"><Stroke w={8} h={6} weight={2} d="M1 1l3 3 3-3" /></NavButton>
      <NavButton $w={24} aria-label="Yukarı"><Stroke w={12} h={14} weight={2} d="M6 13V2M1 7l5-5 5 5" /></NavButton>
      <Address>
        <PcIcon />
        <Stroke w={10} h={8} color="#9a9a9a" d="M3 1l3 3-3 3" />
        <Crumb href="#">Bu bilgisayar</Crumb>
      </Address>
      <SearchBox type="search" aria-label="Ara" />
    </NavBar>

    <Body>
      <Sidebar>
        {tree.map((group, i) => (
          <ul key={i}>
            {group.map((item) => (
              <TreeRow key={item.name} $depth={item.depth ?? 0} $selected={item.selected}>
                {item.icon}
                <TreeLabel>{item.name}</TreeLabel>
                {item.pinned && <PinIcon />}
              </TreeRow>
            ))}
          </ul>
        ))}
      </Sidebar>
      <Content>
        <Section>
          <Head>Klasörler (7)</Head>
          <Tiles $rows={2}>
            <Tile><BigFolder badge="cube" /><TileName>3D Nesneler</TileName></Tile>
            <Tile><BigFolder badge="note" /><TileName>Müzikler</TileName></Tile>
            <Tile><BigFolder /><TileName>Belgeler</TileName></Tile>
          </Tiles>
        </Section>
        <Section>
          <Head>Cihazlar ve sürücüler (2)</Head>
          <Tiles>
            <Tile $selected><BigDrive /><TileName>Yerel Disk (C:)</TileName></Tile>
          </Tiles>
        </Section>
        <Section>
          <Head>Ağdaki konumlar (1)</Head>
          <Tiles>
            <Tile><MediaServer /><TileName>MediaShare:1</TileName></Tile>
          </Tiles>
        </Section>
      </Content>
    </Body>

    <StatusBar>
      <StatusItem>10 öğe</StatusItem>
      <StatusItem>1 öğe seçildi</StatusItem>
      <ViewButtons>
        <button aria-label="Ayrıntılar">
          <svg width="16" height="14" viewBox="0 0 16 14">
            <path d="M.5.5h4v12h-4zM.5 4.500h4M.5 8.500h4" fill="#fff" stroke="#9a9a9a" />
            <path d="M6 2.500h4M12 2.500h4M6 6.500h4M12 6.500h4M6 10.500h4M12 10.500h4" stroke="#8a8a8a" />
            <path d="M2 2.500h1M2 6.500h1M2 10.500h1" stroke="#333" />
          </svg>
        </button>
        <button aria-label="Büyük simgeler"><PicturesIcon /></button>
      </ViewButtons>
    </StatusBar>
  </>
);

const PropertiesDialog = () => (
  <PropsWindow role="dialog" aria-label="Yerel Disk (C:) Özellikleri">
    <DialogTitle $dim><TitleDrive />Yerel Disk (C:) Özellikleri</DialogTitle>
    <TabStack role="tablist">
      <TabRow>
        <PropTab role="tab" $w={79}>Genel</PropTab>
        <PropTab role="tab" $w={83}>Araçlar</PropTab>
        <PropTab role="tab" $w={91}>Donanım</PropTab>
      </TabRow>
      <TabRow>
        <PropTabActive role="tab" aria-selected>Güvenlik</PropTabActive>
        <PropTab role="tab" $w={136}>Önceki Sürümler</PropTab>
      </TabRow>
    </TabStack>
    <PropPage>
      <FieldRow $label={78}>
        <dt>Nesne adı:</dt>
        <dd>C:\</dd>
      </FieldRow>
      <Notice $gap={5} $top={25}>
        <InfoIcon />
        <NoticeText>
          <p>Bu nesnenin özelliklerini görüntülemek için Okuma izinlerine sahip olmanız gerekir.</p>
          <p>Devam etmek için Gelişmiş'i tıklatın.</p>
        </NoticeText>
      </Notice>
      <PageNote>Özel izinler veya gelişmiş ayarlar için Gelişmiş'i tıklatın.</PageNote>
    </PropPage>
    <DialogButtons $gap={8} $right={7}>
      <PushButton>Tamam</PushButton>
      <PushButton>İptal</PushButton>
      <PushButton disabled>Uygula</PushButton>
    </DialogButtons>
  </PropsWindow>
);

const SecurityDialog = () => (
  <SecurityWindow role="dialog" aria-label="Yerel Disk (C:) İçin Gelişmiş Güvenlik Ayarları">
    <DialogTitle>
      <YellowFolder />
      Yerel Disk (C:) İçin Gelişmiş Güvenlik Ayarları
      <DialogCaption>
        <CaptionButton aria-label="Simge durumuna küçült"><Stroke w={10} h={10} color="#c8c8c8" d="M0 5.500h10" /></CaptionButton>
        <CaptionButton aria-label="Ekranı kapla"><Stroke w={10} h={10} d="M.5.5h9v9h-9z" /></CaptionButton>
      </DialogCaption>
    </DialogTitle>
    <SecurityPage>
      <OwnerFields>
        <FieldRow $label={93}>
          <dt>Adı:</dt>
          <dd>C:\</dd>
        </FieldRow>
        <FieldRow $label={93}>
          <dt>Sahibi:</dt>
          <OwnerValue>
            Geçerli sahip gösterilemiyor.
            <ChangeLink href="#"><ShieldIcon />Değiştir</ChangeLink>
          </OwnerValue>
        </FieldRow>
      </OwnerFields>
      <SecurityTabs role="tablist">
        <SecurityTab role="tab" aria-selected $look="active">İzinler</SecurityTab>
        <SecurityTab role="tab">Denetim</SecurityTab>
        <SecurityTab role="tab" $look="hover">Etkin Erişim</SecurityTab>
      </SecurityTabs>
      <SecurityBody>
        <Notice $gap={2} $top={16}>
          <InfoIcon />
          <SecurityText>
            <p>Bu nesnenin özelliklerini görüntülemek için Okuma izinlerine sahip olmanız gerekir.</p>
            <p>İşlemi yönetici izinleriyle yapmayı denemek için Devam'ı tıklatın.</p>
          </SecurityText>
        </Notice>
        <ContinueButton><ShieldIcon />Devam</ContinueButton>
      </SecurityBody>
    </SecurityPage>
    <DialogButtons $gap={9} $right={12}>
      <PushButton>Tamam</PushButton>
      <PushButton>İptal</PushButton>
      <PushButton disabled>Uygula</PushButton>
    </DialogButtons>
  </SecurityWindow>
);

export default function App() {
  return (
    <Screen>
      <Global />
      <ExplorerWindow />
      <Taskbar>
        <TaskButton aria-label="Başlat">
          <svg width="16" height="16" viewBox="0 0 16 16" fill="#fff">
            <path d="M0 2.300l6.500-.9v6.200H0zM7.300 1.300L16 0v7.600H7.300zM0 8.400h6.500v6.200L0 13.700zM7.300 8.400H16V16l-8.700-1.300z" />
          </svg>
        </TaskButton>
        <TaskButton aria-label="Ara">
          <Stroke w={18} h={18} color="#fff" weight={1.4} d="M11.500 1.500a5 5 0 1 1 0 10 5 5 0 0 1 0-10zM8 10.500L1.500 17" />
        </TaskButton>
        <TaskButton aria-label="Görev görünümü">
          <Stroke w={16} h={16} color="#fff" d="M.5 0v2.500h10V0M.5 16v-2.500h10V16M.5 5.500h10v5H.5zM14.500 1v2.500M14.500 8.500V16M13 5.500h3M13 6.500h3" />
        </TaskButton>
        <TaskButton $w={38} $inset={2} aria-label="Google Chrome"><ChromeIcon /></TaskButton>
        <TaskButton $open $active aria-label="Dosya Gezgini"><ExplorerFolder size={18} /></TaskButton>
        <TaskButton $w={28} $inset={5} $open aria-label="Google Chrome penceresi"><ChromeIcon /></TaskButton>
        <Tray>
          <button aria-label="Gizli simgeler"><Stroke w={12} h={8} color="#fff" d="M1 7l5-5 5 5" /></button>
          <svg width="17" height="14" viewBox="0 0 17 14" fill="none" stroke="#fff">
            <path d="M5.500 3.500h10v8h-10zM16.500 6v3M1.500 1v2.500M4.500 1v2.500M.5 3.500h5v2h-5zM3 5.500v6h2.500" />
            <path d="M7 5h5v5H7z" fill="#fff" stroke="none" />
          </svg>
          <svg width="15" height="14" viewBox="0 0 15 14" fill="none" stroke="#d8d8d8">
            <path d="M2 13A12 12 0 0 1 14 2M5 13a9 9 0 0 1 9-8M8 13a6 6 0 0 1 6-5" />
            <circle cx="12" cy="12" r="1.500" fill="#fff" stroke="none" />
          </svg>
          <svg width="17" height="14" viewBox="0 0 17 14" fill="none" stroke="#fff">
            <path d="M.5 4.500h2.500l3.500-3v11L3 9.500H.5zM8.500 5q1.500 2 0 4M10.500 3.500q2.500 3.500 0 7" />
            <path d="M12.500 2q4 5 0 10.500" stroke="#6c6c6c" />
          </svg>
          <Clock>11:19</Clock>
          <button aria-label="Bildirimler">
            <svg width="16" height="16" viewBox="0 0 16 16">
              <path d="M0 0h16v13h-5l-3 3-3-3H0z" fill="#fff" />
              <path d="M3 3.500h10M3 6.500h10M3 9.500h6" stroke="#101010" />
            </svg>
          </button>
          <ShowDesktop aria-label="Masaüstünü göster" />
        </Tray>
      </Taskbar>
      <PropertiesDialog />
      <SecurityDialog />
    </Screen>
  );
}
